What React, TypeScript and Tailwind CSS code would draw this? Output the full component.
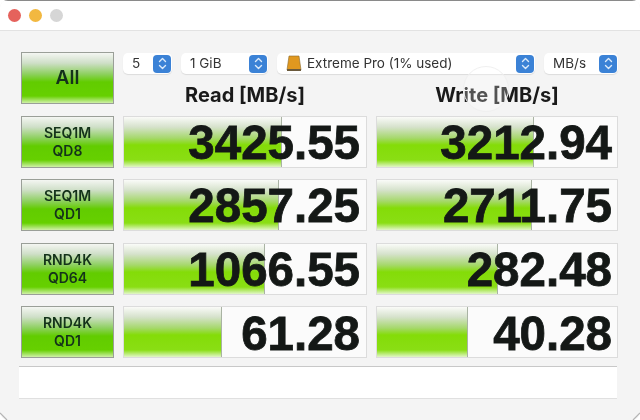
import React from "react";

const font = "font-['Inter','Liberation_Sans',sans-serif]";

function Stepper() {
  return (
    <span className="flex h-[18px] w-[18px] items-center justify-center rounded-[4px] bg-[#3b82d6]">
      <svg width="9" height="13" viewBox="0 0 9 13" fill="none" stroke="#dcebfb" strokeWidth="1.4" strokeLinecap="round" strokeLinejoin="round">
        <path d="M1.5 4.5 4.5 1.5 7.5 4.5" />
        <path d="M1.5 8.5 4.5 11.5 7.5 8.5" />
      </svg>
    </span>
  );
}

function Select({ label, width, icon }: { label: string; width: string; icon?: boolean }) {
  return (
    <div className={`flex h-[21px] items-center justify-between rounded-[5px] bg-white pr-[1px] pl-[9px] shadow-[0_1px_1px_rgba(0,0,0,0.1)] ${width}`}>
      <span className="flex items-center gap-[5px] text-[13.5px] text-[#333] leading-none">
        {icon && (
          <svg width="16" height="17" viewBox="0 0 16 17">
            <path d="M3 1h10l2 14H1z" fill="#e0981f" stroke="#8a6a2c" strokeWidth="0.6" />
            <rect x="1" y="14" width="14" height="2" fill="#6b5a3c" />
          </svg>
        )}
        {label}
      </span>
      <Stepper />
    </div>
  );
}

function TestButton({ children, big }: { children: React.ReactNode; big?: boolean }) {
  return (
    <div
      className={`flex h-[52px] w-[93px] flex-col items-center justify-center border border-[#9a9f98] bg-[linear-gradient(180deg,#f4f6f2_0%,#cfdfc8_20%,#8ed060_42%,#62cc00_58%,#66d000_86%,#d0f0a8_100%)] font-semibold text-[#14321a] ${big ? "text-[19px]" : "text-[14px] leading-[18px]"}`}
    >
      {children}
    </div>
  );
}

function Cell({ value, bar, width, pad }: { value: string; bar: number; width: string; pad: string }) {
  return (
    <div className={`relative flex h-[52px] items-center justify-end border border-[#dcdcdc] bg-[#fbfbfb] pt-[2px] ${pad} ${width}`}>
      <div
        className="absolute inset-y-0 left-0 border-r border-[#a9b3a3] bg-[linear-gradient(180deg,#fafbf8_0%,#d6e2cc_20%,#a6d86c_42%,#84dc08_56%,#8ade14_86%,#e2f6c8_100%)]"
        style={{ width: bar }}
      />
      <span className="relative text-[47.5px] leading-none font-bold text-[#141816] [-webkit-text-stroke:0.8px_#141816] font-['Liberation_Sans',sans-serif]">
        {value}
      </span>
    </div>
  );
}

const rows = [
  { a: "SEQ1M", b: "QD8", read: "3425.55", readBar: 158, write: "3212.94", writeBar: 157 },
  { a: "SEQ1M", b: "QD1", read: "2857.25", readBar: 155, write: "2711.75", writeBar: 155 },
  { a: "RND4K", b: "QD64", read: "1066.55", readBar: 141, write: "282.48", writeBar: 121 },
  { a: "RND4K", b: "QD1", read: "61.28", readBar: 98, write: "40.28", writeBar: 91 },
];

export default function App() {
  return (
    <div className="relative h-[420px] w-[640px] overflow-hidden bg-white blur-[0.4px]">
      <div className={`flex h-[420px] w-[640px] flex-col overflow-hidden rounded-[8px] bg-[#f4f4f4] ${font}`}>
        <div className="flex h-[31px] items-center gap-[8px] border-t border-b border-t-[#8a8a8a] border-b-[#e2e2e2] bg-white pb-[1px] pl-[8px]">
          <span className="h-[13px] w-[13px] rounded-full bg-[#e5625c]" />
          <span className="h-[13px] w-[13px] rounded-full bg-[#f2b840]" />
          <span className="h-[13px] w-[13px] rounded-full bg-[#d6d6d6]" />
        </div>

        <div className="flex flex-col gap-[11.6px] pt-[21px] pl-[21px]">
          <div className="flex h-[52px] gap-[9px]">
            <TestButton big>All</TestButton>
            <div className="flex flex-col pt-[1px]">
              <div className="flex gap-[9px]">
                <Select label="5" width="w-[49px]" />
                <Select label="1 GiB" width="w-[87px]" />
                <Select label="Extreme Pro (1% used)" width="w-[258px]" icon />
                <Select label="MB/s" width="w-[74px]" />
              </div>
              <div className="mt-[9px] flex gap-[9px] text-[20px] leading-[24px] font-bold text-[#1a1a1a]">
                <div className="w-[244px] text-center">Read [MB/s]</div>
                <div className="w-[242px] text-center">Write [MB/s]</div>
              </div>
            </div>
          </div>

          {rows.map((r) => (
            <div key={r.a + r.b} className="flex gap-[9px]">
              <TestButton>
                <span>{r.a}</span>
                <span>{r.b}</span>
              </TestButton>
              <Cell value={r.read} bar={r.readBar} width="w-[244px]" pad="pr-[6px]" />
              <Cell value={r.write} bar={r.writeBar} width="w-[242px]" pad="pr-[5px]" />
            </div>
          ))}
        </div>

        <div className="mt-[8px] ml-[19px] h-[33px] w-[598px] border-t border-b border-t-[#c8c8c8] border-b-[#e0e0e0] bg-white" />
      </div>

      {/* faint round overlay sitting on the Write heading */}
      <div className="absolute top-[66px] left-[463px] h-[46px] w-[46px] rounded-full border border-[#f0f0f0] bg-white/25" />

      <svg className="absolute bottom-0 left-0" width="8" height="8" viewBox="0 0 8 8" fill="none" stroke="#b4b4b4" strokeWidth="1.2">
        <path d="M0 1 7 8" />
      </svg>
      <svg className="absolute right-0 bottom-0" width="8" height="8" viewBox="0 0 8 8" fill="none" stroke="#b4b4b4" strokeWidth="1.2">
        <path d="M8 1 1 8" />
      </svg>
    </div>
  );
}
